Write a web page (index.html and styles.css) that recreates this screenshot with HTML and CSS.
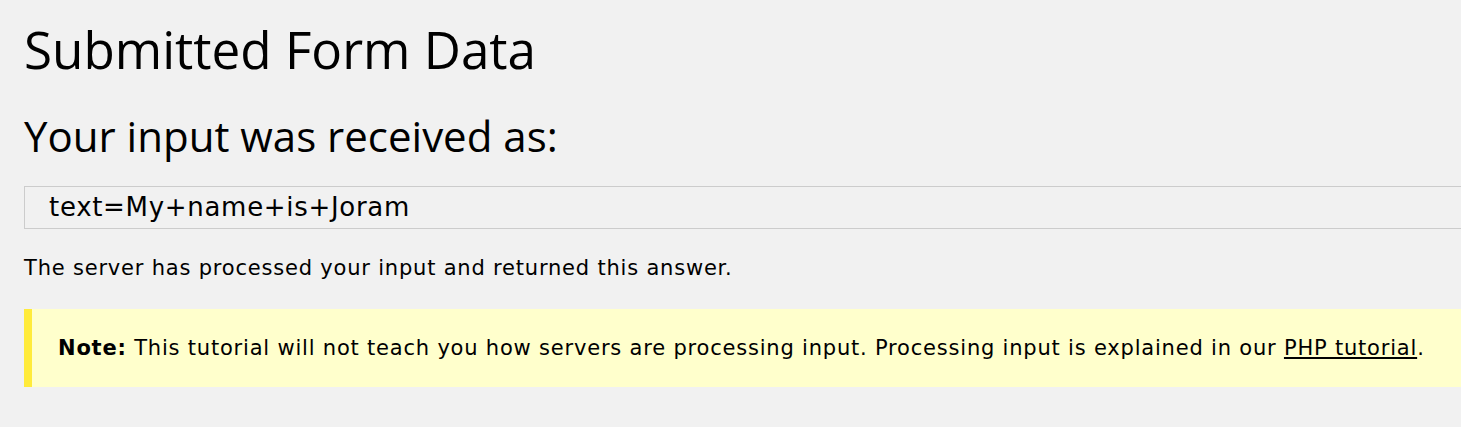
FILE: index.html
```html
<!DOCTYPE html>
<html>
<head>
<meta charset="utf-8">
<title>Submitted Form Data</title>
<link rel="stylesheet" href="styles.css">
</head>
<body>
<div class="page">
  <h1 class="title">Submitted Form Data</h1>
  <h2 class="subtitle">Your input was received as:</h2>
  <div class="code-box">text=My+name+is+Joram</div>
  <p class="answer">The server has processed your input and returned this answer.</p>
  <div class="note">
    <p class="note-text"><b>Note:</b> This tutorial will not teach you how servers are processing input. Processing input is explained in our <a class="note-link" href="#">PHP tutorial</a>.</p>
  </div>
</div>
</body>
</html>
```
FILE: styles.css
```css
html {
  overflow: hidden;
  background: #f1f1f1;
}
body {
  margin: 0;
  background: #f1f1f1;
  color: #000;
  font-family: "DejaVu Sans", Verdana, sans-serif;
  font-size: 21px;
  letter-spacing: 0.8px;
}
.page {
  width: calc(100% + 40px);
  padding: 19px 0 0 24px;
  box-sizing: border-box;
}
.title {
  font-family: "Open Sans", "Noto Sans", sans-serif;
  font-weight: 400;
  font-size: 51.2px;
  letter-spacing: 0;
  line-height: 1.2;
  margin: 0 0 31px;
}
.subtitle {
  font-family: "Open Sans", "Noto Sans", sans-serif;
  font-weight: 400;
  font-size: 42px;
  letter-spacing: 0;
  line-height: 1.2;
  margin: 0 0 24px;
}
.code-box {
  border: 1px solid #cccccc;
  padding: 6px 24px;
  font-size: 26px;
  letter-spacing: 0.7px;
  line-height: 29px;
}
.answer {
  margin: 24px 0 25px;
  line-height: 1.5;
}
.note {
  background: #ffffcc;
  border-left: 8px solid #ffeb3b;
  padding: 24px 26px 22px;
}
.note-text {
  margin: 0;
  line-height: 1.5;
}
.note-link {
  color: #000;
}
```
